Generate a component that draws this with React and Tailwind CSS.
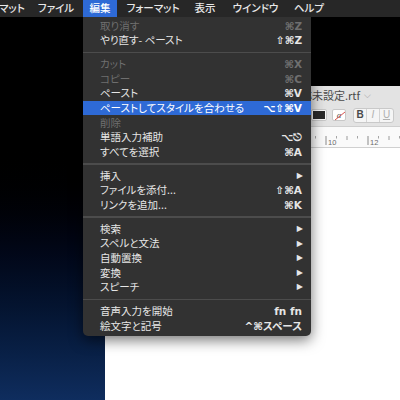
import React from "react";

const JP = { fontFamily: '"Noto Sans CJK JP", "Noto Sans", sans-serif', fontFeatureSettings: '"palt"' };
const SYM = { fontFamily: '"DejaVu Sans", "Noto Sans CJK JP", sans-serif' };

const items = [
  { t: "取り消す", s: "⌘Z", d: true },
  { t: "やり直す- ペースト", s: "⇧⌘Z" },
  "sep",
  { t: "カット", s: "⌘X", d: true },
  { t: "コピー", s: "⌘C", d: true },
  { t: "ペースト", s: "⌘V" },
  { t: "ペーストしてスタイルを合わせる", s: "⌥⇧⌘V", hl: true },
  { t: "削除", d: true },
  { t: "単語入力補助", s: "⌥⎋" },
  { t: "すべてを選択", s: "⌘A" },
  "sep",
  { t: "挿入", sub: true },
  { t: "ファイルを添付...", s: "⇧⌘A" },
  { t: "リンクを追加...", s: "⌘K" },
  "sep",
  { t: "検索", sub: true },
  { t: "スペルと文法", sub: true },
  { t: "自動置換", sub: true },
  { t: "変換", sub: true },
  { t: "スピーチ", sub: true },
  "sep",
  { t: "音声入力を開始", s: "fn fn" },
  { t: "絵文字と記号", s: "^⌘スペース" },
];

const bar = [
  { t: "マット", w: "w-[34px]", cls: "ml-[-5px]" },
  { t: "ファイル", w: "w-[54px]" },
  { t: "編集", w: "w-[34px]", hl: true },
  { t: "フォーマット", w: "w-[72px]" },
  { t: "表示", w: "w-[32px]" },
  { t: "ウインドウ", w: "w-[69px]" },
  { t: "ヘルプ", w: "w-[38px]" },
];

function Ruler() {
  const ticks = [];
  for (let i = 0; i <= 28; i++) {
    const n = i / 2;
    const x = 221 + (n - 10) * 21;
    const whole = i % 2 === 0;
    const even = whole && (n % 2 === 0);
    if (even) {
      ticks.push(<line key={i} x1={x} x2={x} y1={9} y2={18} stroke="#8a8a8a" strokeWidth="1" />);
      if (n > 0 && n <= 12) ticks.push(<text key={"t" + i} x={x + 2} y={18} fontSize="7.5" fill="#6a6a6a" fontFamily="Liberation Sans, sans-serif">{n}</text>);
    } else if (whole) {
      ticks.push(<line key={i} x1={x} x2={x} y1={9} y2={13} stroke="#9a9a9a" strokeWidth="1" />);
    } else {
      ticks.push(<line key={i} x1={x} x2={x} y1={9} y2={11.5} stroke="#a5a5a5" strokeWidth="1" />);
    }
  }
  return (
    <svg width="460" height="21" className="block">
      {ticks}
    </svg>
  );
}

export default function App() {
  return (
    <div className="relative w-[400px] h-[400px] overflow-hidden bg-gradient-to-b from-black from-35% to-[#0f2d5e]" style={JP}>
      {/* menu bar */}
      <div className="relative z-20 flex h-[17px] bg-[#272727] text-[10.5px] text-[#e8e8e8] font-medium leading-none">
        {bar.map((b, i) => (
          <div key={i} className={`${b.w} ${b.cls || ""} shrink-0 flex items-center justify-center ${b.hl ? "bg-[#2e6ad6] text-white" : ""}`}>
            {b.t}
          </div>
        ))}
      </div>

      {/* TextEdit window behind */}
      <div className="absolute left-[105px] top-[86px] w-[460px] h-[340px] bg-white rounded-t-[5px] overflow-hidden flex flex-col">
        <div className="h-[18px] bg-[#e3e3e3] flex items-center pl-[185px] text-[11px] text-[#4a4a4a] leading-none">
          <span>名称未設定.rtf</span>
          <span className="ml-[4px] text-[#a0a0a0] text-[9px]" style={SYM}>⌵</span>
        </div>
        <div className="h-[23px] bg-[#e3e3e3] flex items-center pl-[206px] border-b border-[#cfcfcf]">
          <div className="w-[16px] h-[12px] bg-[#f7f7f7] border border-[#c8c8c8] rounded-[2px] flex items-center justify-center">
            <div className="w-[12px] h-[8px] bg-[#2a2a2a]" />
          </div>
          <div className="ml-[5px] w-[14px] h-[12px] bg-white border border-[#c8c8c8] rounded-[2px] relative flex items-center justify-center text-[9px] text-[#555] leading-none" style={{ fontFamily: '"Liberation Serif", serif', fontStyle: "italic" }}>
            a
            <svg className="absolute inset-0" width="14" height="12"><line x1="2" y1="10" x2="12" y2="2" stroke="#d9534f" strokeWidth="1" /></svg>
          </div>
          <div className="ml-[7px] h-[15px] flex bg-[#f5f5f5] border border-[#c9c9c9] rounded-[3px] text-[10px] leading-none" style={{ fontFamily: '"Liberation Sans", sans-serif' }}>
            <div className="w-[13px] flex items-center justify-center font-bold text-[#4a4a4a] border-r border-[#d4d4d4]">B</div>
            <div className="w-[13px] flex items-center justify-center italic text-[#b0b0b0] border-r border-[#d4d4d4]">I</div>
            <div className="w-[13px] flex items-center justify-center underline text-[#b0b0b0]">U</div>
          </div>
        </div>
        <div className="h-[21px] bg-[#fafafa] border-b border-[#d0d0d0]">
          <Ruler />
        </div>
        <div className="flex-1 bg-white" />
      </div>

      {/* Edit menu dropdown */}
      <div className="absolute z-10 left-[83px] top-[17px] w-[228px] bg-[#323232] rounded-b-[5px] pt-[1.5px] pb-[3px] shadow-[0_4px_14px_rgba(0,0,0,0.55)] text-[10.5px] leading-none">
        {items.map((it, i) =>
          it === "sep" ? (
            <div key={i} className="h-[9.4px] flex items-center">
              <div className="w-full h-[1.5px] bg-[#4c4c4c]" />
            </div>
          ) : (
            <div
              key={i}
              className={`h-[14.6px] flex items-center justify-between pl-[17px] pr-[9px] ${it.hl ? "bg-[#2e6ad6] text-white" : it.d ? "text-[#6f6f6f]" : "text-[#e6e6e6]"}`}
            >
              <span>{it.t}</span>
              {it.s && <span className="font-bold text-[10.5px]" style={SYM}>{it.s}</span>}
              {it.sub && <span className="text-[8px] mr-[-1px]" style={SYM}>▶</span>}
            </div>
          )
        )}
      </div>
    </div>
  );
}
